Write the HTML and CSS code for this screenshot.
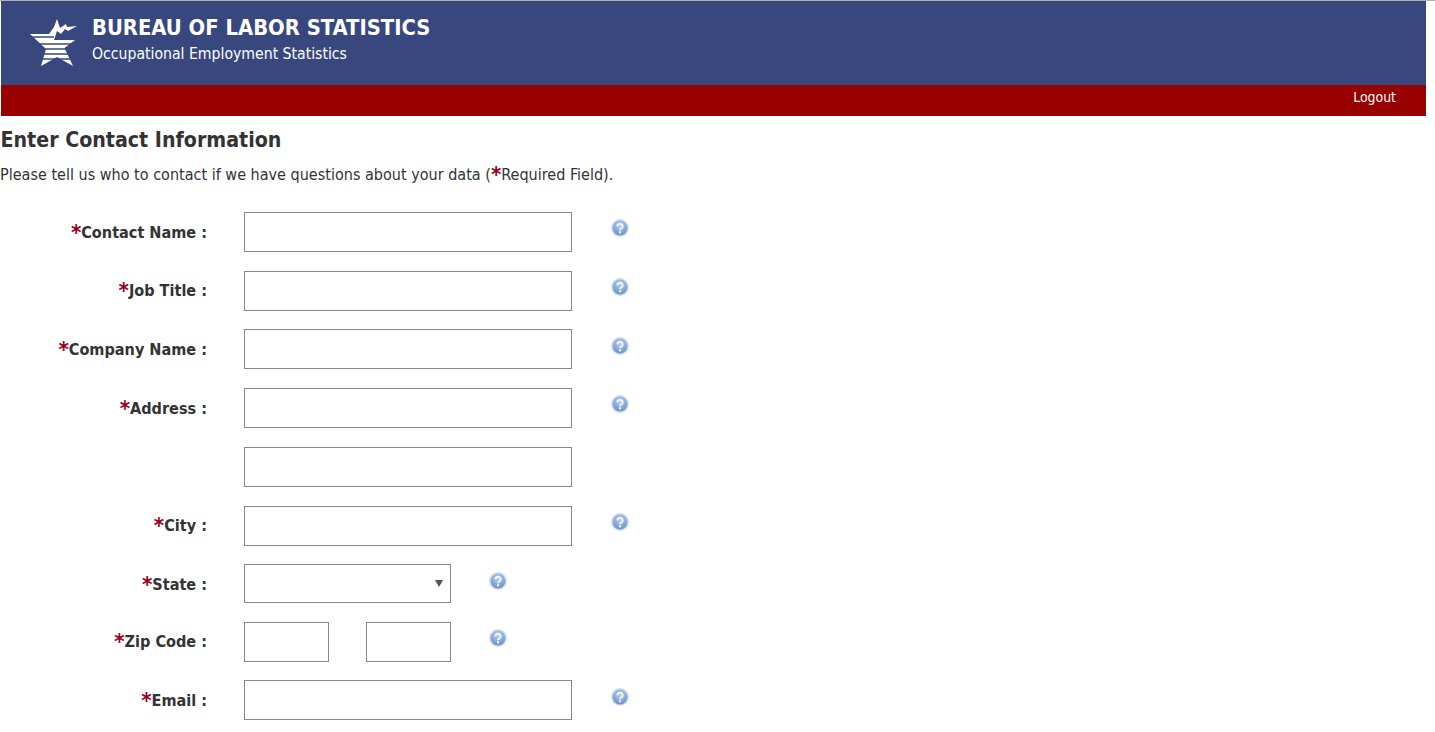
FILE: index.html
```html
<!DOCTYPE html>
<html lang="en">
<head>
<meta charset="utf-8">
<title>Enter Contact Information</title>
<link rel="stylesheet" href="styles.css">
</head>
<body>
<svg width="0" height="0" class="defs">
  <defs>
    <radialGradient id="helpfill" cx="50%" cy="30%" r="70%">
      <stop offset="0" stop-color="#bcd2ec"/>
      <stop offset="0.6" stop-color="#89abd6"/>
      <stop offset="1" stop-color="#6b92c6"/>
    </radialGradient>
    <symbol id="help" viewBox="0 0 18 18">
      <circle cx="9" cy="9" r="9" fill="#cfdef0"/>
      <circle cx="9" cy="9" r="7.400" fill="url(#helpfill)"/>
      <path d="M6.300 7.300a2.700 2.500 0 1 1 4.100 2.100c-.9.5-1.400.9-1.400 1.900" fill="none" stroke="#f2f6fb" stroke-width="1.800"/>
      <rect x="8" y="12.300" width="2.100" height="2" fill="#f2f6fb"/>
    </symbol>
  </defs>
</svg>
<div class="page">
  <header class="banner">
    <svg class="logo" width="48" height="50" viewBox="0 0 48 50">
      <path fill="#fff" d="M0 16H19L24 9 27 1 30 10 36 6 37 9 47 8 38 13 35 11 31 16 27 13 24 22H45L34.500 30 43 48 27 39 11 48 16 31Z"/>
      <g stroke="#38487f" stroke-width="1.500">
        <path d="M0 19H24M0 26H48M0 31H48M0 36H48M0 41H48"/>
      </g>
    </svg>
    <div class="brand">
      <div class="brand-title">BUREAU OF LABOR STATISTICS</div>
      <div class="brand-sub">Occupational Employment Statistics</div>
    </div>
  </header>
  <nav class="subbar"><a class="logout" href="#">Logout</a></nav>
  <main>
    <h1 class="title">Enter Contact Information</h1>
    <p class="intro">Please tell us who to contact if we have questions about your data (<span class="req">*</span>Required Field).</p>
    <form class="form">
      <div class="row"><label class="label"><span class="req">*</span>Contact Name :</label><input class="field wide" type="text"><svg class="help"><use href="#help"/></svg></div>
      <div class="row"><label class="label"><span class="req">*</span>Job Title :</label><input class="field wide" type="text"><svg class="help"><use href="#help"/></svg></div>
      <div class="row"><label class="label"><span class="req">*</span>Company Name :</label><input class="field wide" type="text"><svg class="help"><use href="#help"/></svg></div>
      <div class="row"><label class="label"><span class="req">*</span>Address :</label><input class="field wide" type="text"><svg class="help"><use href="#help"/></svg></div>
      <div class="row"><span class="label"></span><input class="field wide" type="text"></div>
      <div class="row"><label class="label"><span class="req">*</span>City :</label><input class="field wide" type="text"><svg class="help"><use href="#help"/></svg></div>
      <div class="row row-select"><label class="label"><span class="req">*</span>State :</label><div class="select"><span class="caret"></span></div><svg class="help help-short"><use href="#help"/></svg></div>
      <div class="row"><label class="label"><span class="req">*</span>Zip Code :</label><input class="field zip" type="text"><input class="field zip zip2" type="text"><svg class="help help-short"><use href="#help"/></svg></div>
      <div class="row"><label class="label"><span class="req">*</span>Email :</label><input class="field wide" type="text"><svg class="help"><use href="#help"/></svg></div>
    </form>
  </main>
</div>
</body>
</html>
```
FILE: styles.css
```css
html, body { margin: 0; padding: 0; background: #fff; }
body {
  height: 732px;
  overflow: hidden;
  border-top: 1px solid #b0b0b0;
  font-family: "DejaVu Sans Condensed", "DejaVu Sans", sans-serif;
  color: #333;
  box-sizing: border-box;
}
.defs { position: absolute; }
.page { width: 1425px; margin-left: 1px; }
.banner {
  height: 84px;
  background: #38487f;
  display: flex;
  align-items: flex-start;
  color: #fff;
  box-sizing: border-box;
  padding: 17px 0 0 29px;
}
.logo { display: block; flex: none; }
.brand { margin-left: 14px; margin-top: -4px; }
.brand-title { font-size: 21.800px; font-weight: 700; line-height: 28px; }
.brand-sub { font-size: 15.650px; line-height: 22px; margin-top: 1px; }
.subbar {
  height: 31px;
  background: #990000;
  display: flex;
  justify-content: flex-end;
  align-items: center;
  padding-right: 30px;
}
.logout { color: #fff; text-decoration: none; font-size: 13.900px; margin-top: -8px; }
.title { margin: 12px 0 0 -0.500px; font-size: 21.200px; line-height: 24px; font-weight: 700; color: #333; }
.intro { margin: 12px 0 0 -1px; font-size: 16.050px; line-height: 22px; }
.req { color: #990022; font-weight: 700; font-size: 22px; line-height: 0; vertical-align: -2px; }
.form { margin: 26px 0 0 -1px; }
.row { display: flex; align-items: flex-start; margin-bottom: 18.720px; }
.row-select { margin-bottom: 17.300px; }
.label {
  box-sizing: border-box;
  width: 207px;
  height: 40px;
  flex: none;
  text-align: right;
  font-size: 16.100px;
  font-weight: 700;
  line-height: 40px;
  padding-top: 0.600px;
  margin-right: 37px;
}
.field {
  display: block;
  box-sizing: border-box;
  height: 40px;
  border: 1px solid #888;
  background: #fff;
  padding: 0;
  margin: 0;
  flex: none;
}
.wide { width: 328px; }
.zip { width: 85px; }
.zip2 { margin-left: 37px; }
.select {
  box-sizing: border-box;
  width: 207px;
  height: 39px;
  border: 1px solid #888;
  display: flex;
  align-items: center;
  justify-content: flex-end;
  padding-right: 7px;
}
.caret {
  width: 0;
  height: 0;
  border-left: 4px solid transparent;
  border-right: 4px solid transparent;
  border-top: 7px solid #555;
}
.help { width: 18px; height: 18px; margin: 7.300px 0 0 39px; flex: none; }
.help-short { margin-left: 38px; }
```
